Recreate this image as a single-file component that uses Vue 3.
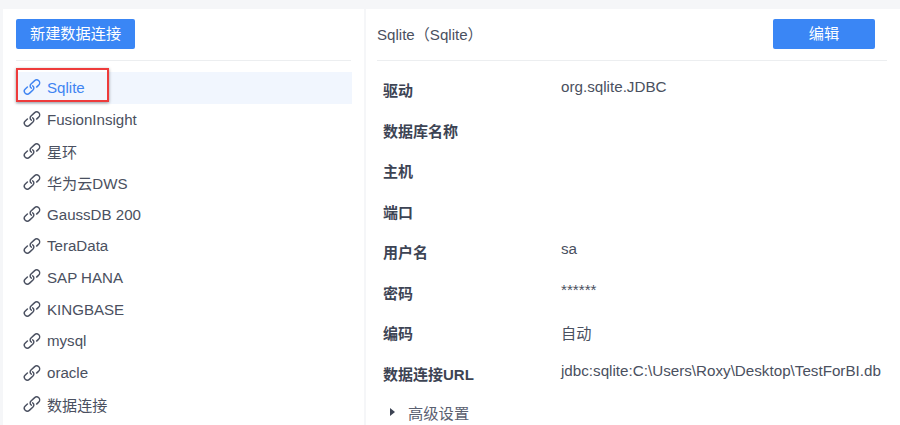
<script setup>
const items = ['Sqlite', 'FusionInsight', '星环', '华为云DWS', 'GaussDB 200', 'TeraData', 'SAP HANA', 'KINGBASE', 'mysql', 'oracle', '数据连接']
const fields = [
  ['驱动', 'org.sqlite.JDBC'],
  ['数据库名称', ''],
  ['主机', ''],
  ['端口', ''],
  ['用户名', 'sa'],
  ['密码', '******'],
  ['编码', '自动'],
  ['数据连接URL', 'jdbc:sqlite:C:\\Users\\Roxy\\Desktop\\TestForBI.db']
]
</script>

<template>
  <div class="page">
    <aside class="left">
      <div class="head">
        <button class="btn new">新建数据连接</button>
      </div>
      <ul class="list">
        <li v-for="(n, i) in items" :key="n" class="item" :class="{ active: i === 0 }">
          <svg class="ico" width="18" height="18" viewBox="0 0 18 18" fill="none" stroke="currentColor" stroke-width="1.45" stroke-linecap="round" stroke-linejoin="round">
            <path d="M8.4 10.2 C6.9 9.3 6.7 7.2 8 6 L11.4 2.9 C12.7 1.7 14.6 1.7 15.8 2.8 C17 4 16.9 5.9 15.7 7.1 L13.6 9.1" />
            <path d="M9.6 7.8 C11.1 8.7 11.3 10.8 10 12 L6.6 15.1 C5.3 16.3 3.4 16.3 2.2 15.2 C1 14 1.1 12.1 2.3 10.9 L4.4 8.9" />
          </svg>
          <span>{{ n }}</span>
        </li>
      </ul>
      <div class="mark"></div>
    </aside>
    <main class="right">
      <div class="head title-row">
        <span class="title">Sqlite（Sqlite）</span>
        <button class="btn edit">编辑</button>
      </div>
      <dl class="fields">
        <div v-for="f in fields" :key="f[0]" class="row" :class="{ cjk: f[0] === '编码' }">
          <dt>{{ f[0] }}</dt>
          <dd>{{ f[1] }}</dd>
        </div>
      </dl>
      <div class="adv"><i class="tri"></i><span>高级设置</span></div>
    </main>
  </div>
</template>

<style>
html, body { margin: 0; background: #f5f6f8; overflow: hidden; }
</style>

<style scoped>
.page {
  width: 900px;
  height: 425px;
  box-sizing: border-box;
  padding: 9px 0 0 3px;
  display: flex;
  gap: 2px;
  overflow: hidden;
  font-family: "Liberation Sans", "Noto Sans CJK SC", sans-serif;
  color: #4a5060;
}
.left {
  position: relative;
  width: 361px;
  flex: none;
  background: #fff;
  box-sizing: border-box;
  padding: 0 13px;
}
.right {
  flex: 1;
  background: #fff;
  box-sizing: border-box;
  padding: 0 13px 0 11px;
}
.head {
  height: 52px;
  box-sizing: border-box;
  padding-top: 10px;
  border-bottom: 1px solid #eceef0;
}
.btn {
  display: block;
  height: 30px;
  border: 0;
  border-radius: 2px;
  background: #3a86f5;
  color: #fff;
  font: 15.2px/30px "Liberation Sans", "Noto Sans CJK SC", sans-serif;
  padding: 0;
  text-align: center;
}
.new { width: 119px; }
.edit { width: 102px; margin-right: 12px; }
.title-row { display: flex; justify-content: space-between; align-items: flex-start; }
.title { font-size: 15.1px; line-height: 32px; color: #4a5060; }
.list { list-style: none; margin: 11px 0 0; padding: 0; width: 336px; }
.item {
  height: 31.7px;
  box-sizing: border-box;
  display: flex;
  align-items: center;
  padding: 0 0 1px 7px;
  font-size: 15.1px;
  color: #4a5060;
}
.item.active { background: #f1f6fe; color: #3f84f2; }
.ico { flex: none; margin-right: 6px; }
.mark {
  position: absolute;
  left: 13px;
  top: 59px;
  width: 89px;
  height: 30px;
  border: 2px solid #ee3b3b;
  box-shadow: 0 1px 3px rgba(0, 0, 0, 0.4);
}
.fields { margin: 0; padding: 10px 0 0 6px; }
.row { height: 40.5px; display: flex; }
.row dt {
  width: 178px;
  flex: none;
  font-size: 15px;
  font-weight: 700;
  line-height: 39px;
  color: #3d4454;
}
.row dd {
  margin: 0;
  font-size: 15.2px;
  line-height: 31px;
  color: #4a5060;
  white-space: nowrap;
}
.row.cjk dd { line-height: 39px; }
.adv {
  display: flex;
  align-items: center;
  padding-left: 13px;
  height: 26px;
  margin-top: 4px;
  font-size: 15.3px;
  color: #5a6070;
}
.tri {
  width: 0;
  height: 0;
  border-left: 5px solid #3d4454;
  border-top: 4px solid transparent;
  border-bottom: 4px solid transparent;
  margin-right: 13px;
}
</style>
